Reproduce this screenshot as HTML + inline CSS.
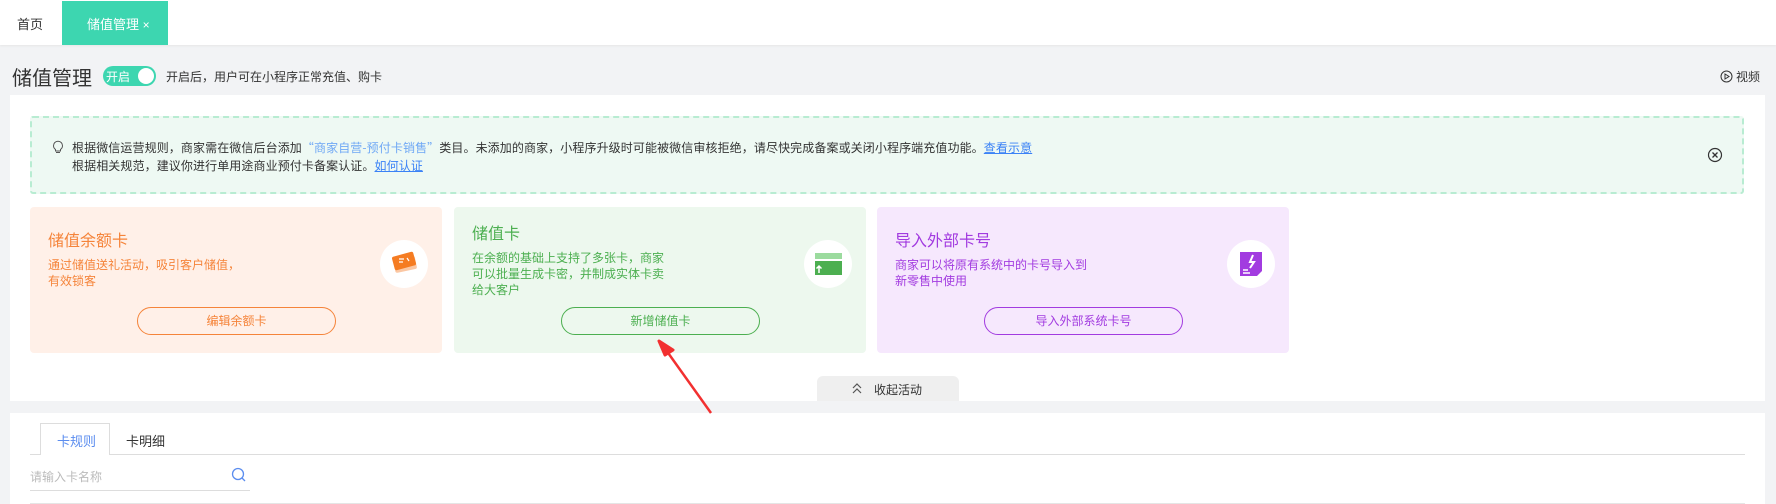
<!DOCTYPE html>
<html><head><meta charset="utf-8"><style>
*{margin:0;padding:0;box-sizing:border-box}
body{width:1776px;height:504px;overflow:hidden;background:#f2f3f5;font-family:"Liberation Sans","Noto Sans CJK SC",sans-serif;position:relative;color:#333}
.a{position:absolute;white-space:nowrap}
.card{position:absolute;top:207px;width:412px;height:146px;border-radius:4px}
.card .t{position:absolute;left:18px;font-size:16px}
.card .d{position:absolute;left:18px;font-size:12px;line-height:16px}
.card .ic{position:absolute;left:350px;top:33px;width:48px;height:48px;border-radius:50%;background:#fff}
.card .b{position:absolute;left:107px;top:100px;width:199px;height:28px;border-radius:14px;border:1px solid;font-size:12px;text-align:center;line-height:26px}
.q{font-family:"Noto Sans CJK SC",sans-serif}
</style></head><body>
<div class="a" style="left:0;top:0;width:1776px;height:45px;background:#fff;box-shadow:0 1px 2px #e6e6e6"></div>
<div class="a" style="left:17px;top:14px;font-size:13px;color:#333">首页</div>
<div class="a" style="left:62px;top:1px;width:106px;height:44px;background:#3dd6b0"></div>
<div class="a" style="left:87px;top:14px;font-size:13px;color:#fff">储值管理 <span style="font-size:12px">×</span></div>

<div class="a" style="left:12px;top:62px;font-size:20px;color:#333">储值管理</div>
<div class="a" style="left:103px;top:66px;width:53px;height:20px;border-radius:10px;background:#3dd6b0"></div>
<div class="a" style="left:106px;top:68px;font-size:12px;color:#fff">开启</div>
<div class="a" style="left:138px;top:68px;width:16px;height:16px;border-radius:50%;background:#fff"></div>
<div class="a" style="left:166px;top:68px;font-size:12px;color:#333">开启后，用户可在小程序正常充值、购卡</div>
<svg class="a" style="left:1720px;top:70px" width="13" height="13" viewBox="0 0 13 13"><circle cx="6.5" cy="6.5" r="5.5" fill="none" stroke="#333" stroke-width="1"/><path d="M5 4v5l4-2.5z" fill="none" stroke="#333" stroke-width="1"/></svg>
<div class="a" style="left:1736px;top:68px;font-size:12px;color:#333">视频</div>

<div class="a" style="left:10px;top:95px;width:1755px;height:306px;background:#fff"></div>
<div class="a" style="left:30px;top:116px;width:1714px;height:78px;background:#eef9f3;border:2px dashed #b8ecd2;border-radius:3px"></div>
<svg class="a" style="left:52px;top:140px" width="12" height="14" viewBox="0 0 12 14"><path d="M3.5 9.5C2 8.3 1.5 7 1.5 5.7a4.5 4.5 0 0 1 9 0c0 1.3-.5 2.6-2 3.8V11h-5z M4 12.5h4" fill="none" stroke="#555" stroke-width="1"/></svg>
<div class="a" style="left:72px;top:139px;font-size:12px;color:#333;letter-spacing:0.1px">根据微信运营规则，商家需在微信后台添加<span class="q" style="color:#6fa8f5">“商家自营-预付卡销售”</span>类目。未添加的商家，小程序升级时可能被微信审核拒绝，请尽快完成备案或关闭小程序端充值功能。<span style="color:#3b82f6;text-decoration:underline">查看示意</span></div>
<div class="a" style="left:72px;top:157px;font-size:12px;color:#333;letter-spacing:0.1px">根据相关规范，建议你进行单用途商业预付卡备案认证。<span style="color:#3b82f6;text-decoration:underline">如何认证</span></div>
<svg class="a" style="left:1707px;top:147px" width="16" height="16" viewBox="0 0 16 16"><circle cx="8" cy="8" r="6.5" fill="none" stroke="#333" stroke-width="1.2"/><path d="M5.5 5.5l5 5M10.5 5.5l-5 5" stroke="#333" stroke-width="1.3"/></svg>

<div class="card" style="left:30px;background:#fff0e8;color:#f5843a">
<div class="t" style="top:20px">储值余额卡</div>
<div class="d" style="top:50px">通过储值送礼活动，吸引客户储值，<br>有效锁客</div>
<div class="ic"><svg width="48" height="48" viewBox="0 0 48 48"><rect x="14" y="18" width="22" height="13" rx="2" fill="#fbc7a3" transform="rotate(-12 25 24)"/><rect x="13" y="14" width="22" height="14" rx="2" fill="#f57c22" transform="rotate(-15 24 21)"/><path d="M19 19h5M19 22h4M27 18l2 3" stroke="#fff" stroke-width="1.2"/></svg></div>
<div class="b" style="border-color:#f5843a">编辑余额卡</div>
</div>
<div class="card" style="left:454px;background:#edf8ee;color:#4caf50">
<div class="t" style="top:13px">储值卡</div>
<div class="d" style="top:43px">在余额的基础上支持了多张卡，商家<br>可以批量生成卡密，并制成实体卡卖<br>给大客户</div>
<div class="ic"><svg width="48" height="48" viewBox="0 0 48 48"><rect x="11" y="13" width="27" height="6" fill="#9bdb9e"/><rect x="11" y="21" width="27" height="14" fill="#4caf50"/><path d="M15 33v-7M12.5 28.5L15 26l2.5 2.5" stroke="#fff" stroke-width="1.5" fill="none"/></svg></div>
<div class="b" style="border-color:#4caf50">新增储值卡</div>
</div>
<div class="card" style="left:877px;background:#f6e8fd;color:#a23be0">
<div class="t" style="top:20px">导入外部卡号</div>
<div class="d" style="top:50px">商家可以将原有系统中的卡号导入到<br>新零售中使用</div>
<div class="ic"><svg width="48" height="48" viewBox="0 0 48 48"><path d="M13 12h22v24H13z" fill="#a23be0"/><path d="M26 15l-3 7h4l-4 6" stroke="#fff" stroke-width="2" fill="none"/><path d="M16 30h5M16 33h7" stroke="#fff" stroke-width="1.5"/><path d="M30 36l5-5v5z" fill="#fff"/></svg></div>
<div class="b" style="border-color:#a23be0">导入外部系统卡号</div>
</div>

<div class="a" style="left:817px;top:376px;width:142px;height:25px;background:#efefef;border-radius:6px 6px 0 0"></div>
<svg class="a" style="left:851px;top:383px" width="12" height="11" viewBox="0 0 12 11"><path d="M2 5l4-4 4 4M2 10l4-4 4 4" fill="none" stroke="#555" stroke-width="1.2"/></svg>
<div class="a" style="left:874px;top:381px;font-size:12px;color:#333">收起活动</div>

<div class="a" style="left:10px;top:413px;width:1755px;height:91px;background:#fff"></div>
<div class="a" style="left:30px;top:454px;width:1715px;height:1px;background:#ddd"></div>
<div class="a" style="left:40px;top:423px;width:70px;height:32px;background:#fff;border:1px solid #ddd;border-bottom:none"></div>
<div class="a" style="left:57px;top:431px;font-size:13px;color:#5b8def">卡规则</div>
<div class="a" style="left:126px;top:431px;font-size:13px;color:#333">卡明细</div>
<div class="a" style="left:30px;top:468px;font-size:12px;color:#bbb">请输入卡名称</div>
<svg class="a" style="left:231px;top:467px" width="16" height="16" viewBox="0 0 16 16"><circle cx="7" cy="7" r="5.5" fill="none" stroke="#5b8def" stroke-width="1.3"/><path d="M11 11l3 3" stroke="#5b8def" stroke-width="1.3"/></svg>
<div class="a" style="left:30px;top:490px;width:220px;height:1px;background:#ddd"></div>
<div class="a" style="left:30px;top:503px;width:1715px;height:1px;background:#e5e5e5"></div>

<svg class="a" style="left:0;top:0" width="1776" height="504"><path d="M711 413L666 350" stroke="#f23030" stroke-width="2.5"/><path d="M659 341L673 350L665 355Z" fill="#f23030" stroke="#f23030" stroke-width="3" stroke-linejoin="round"/></svg>
</body></html>
